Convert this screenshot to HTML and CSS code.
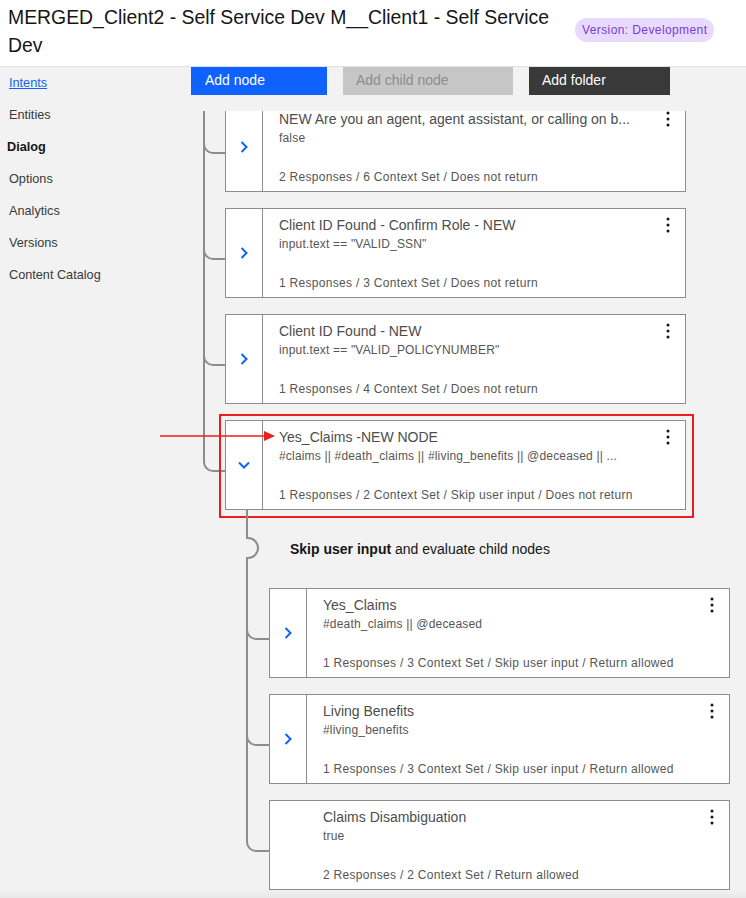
FILE: index.html
```html
<!DOCTYPE html>
<html lang="en">
<head>
<meta charset="utf-8">
<title>Dialog</title>
<link rel="stylesheet" href="styles.css">
</head>
<body>
<header class="header">
  <h1 class="title">MERGED_Client2 - Self Service Dev M__Client1 - Self Service Dev</h1>
  <span class="badge">Version: Development</span>
</header>
<div class="layout">
  <nav class="sidebar">
    <a class="nav-link nav-active" href="#">Intents</a>
    <span class="nav-item">Entities</span>
    <span class="nav-item nav-current">Dialog</span>
    <span class="nav-item">Options</span>
    <span class="nav-item">Analytics</span>
    <span class="nav-item">Versions</span>
    <span class="nav-item">Content Catalog</span>
  </nav>
  <main class="main">
    <div class="toolbar">
      <button class="btn btn-primary">Add node</button>
      <button class="btn btn-disabled">Add child node</button>
      <button class="btn btn-dark">Add folder</button>
    </div>
    <div class="viewport">
      <div class="tree">
        <div class="list">
          <div class="item">
            <div class="card">
              <div class="toggle"><svg class="chev" width="8" height="12" viewBox="0 0 8 12"><path d="M1.5 1 L6.5 6 L1.5 11"/></svg></div>
              <div class="card-body">
                <div class="card-title">NEW Are you an agent, agent assistant, or calling on b...</div>
                <div class="card-sub">false</div>
                <div class="card-foot">2 Responses / 6 Context Set / Does not return</div>
              </div>
              <svg class="kebab" width="4" height="16" viewBox="0 0 4 16"><circle cx="2" cy="2" r="1.5"/><circle cx="2" cy="8" r="1.5"/><circle cx="2" cy="14" r="1.5"/></svg>
            </div>
          </div>
          <div class="item">
            <div class="card">
              <div class="toggle"><svg class="chev" width="8" height="12" viewBox="0 0 8 12"><path d="M1.5 1 L6.5 6 L1.5 11"/></svg></div>
              <div class="card-body">
                <div class="card-title">Client ID Found - Confirm Role - NEW</div>
                <div class="card-sub">input.text == "VALID_SSN"</div>
                <div class="card-foot">1 Responses / 3 Context Set / Does not return</div>
              </div>
              <svg class="kebab" width="4" height="16" viewBox="0 0 4 16"><circle cx="2" cy="2" r="1.5"/><circle cx="2" cy="8" r="1.5"/><circle cx="2" cy="14" r="1.5"/></svg>
            </div>
          </div>
          <div class="item">
            <div class="card">
              <div class="toggle"><svg class="chev" width="8" height="12" viewBox="0 0 8 12"><path d="M1.5 1 L6.5 6 L1.5 11"/></svg></div>
              <div class="card-body">
                <div class="card-title">Client ID Found - NEW</div>
                <div class="card-sub">input.text == "VALID_POLICYNUMBER"</div>
                <div class="card-foot">1 Responses / 4 Context Set / Does not return</div>
              </div>
              <svg class="kebab" width="4" height="16" viewBox="0 0 4 16"><circle cx="2" cy="2" r="1.5"/><circle cx="2" cy="8" r="1.5"/><circle cx="2" cy="14" r="1.5"/></svg>
            </div>
          </div>
          <div class="item">
            <div class="card">
              <div class="toggle"><svg class="chev" width="12" height="8" viewBox="0 0 12 8"><path d="M1 1.5 L6 6.5 L11 1.5"/></svg></div>
              <div class="card-body">
                <div class="card-title">Yes_Claims -NEW NODE</div>
                <div class="card-sub">#claims || #death_claims || #living_benefits || @deceased || ...</div>
                <div class="card-foot">1 Responses / 2 Context Set / Skip user input / Does not return</div>
              </div>
              <svg class="kebab" width="4" height="16" viewBox="0 0 4 16"><circle cx="2" cy="2" r="1.5"/><circle cx="2" cy="8" r="1.5"/><circle cx="2" cy="14" r="1.5"/></svg>
              <div class="highlight"></div>
              <svg class="arrow" width="115" height="10" viewBox="0 0 115 10"><line x1="0" y1="5" x2="106" y2="5"/><polygon points="104,0 115,5 104,10"/></svg>
            </div>
            <div class="children">
              <div class="branch-label"><span class="bump"></span><b>Skip user input</b>&nbsp;and evaluate child nodes</div>
              <div class="list list-child">
                <div class="item item-child">
                  <div class="card">
                    <div class="toggle"><svg class="chev" width="8" height="12" viewBox="0 0 8 12"><path d="M1.5 1 L6.5 6 L1.5 11"/></svg></div>
                    <div class="card-body">
                      <div class="card-title">Yes_Claims</div>
                      <div class="card-sub">#death_claims || @deceased</div>
                      <div class="card-foot">1 Responses / 3 Context Set / Skip user input / Return allowed</div>
                    </div>
                    <svg class="kebab" width="4" height="16" viewBox="0 0 4 16"><circle cx="2" cy="2" r="1.5"/><circle cx="2" cy="8" r="1.5"/><circle cx="2" cy="14" r="1.5"/></svg>
                  </div>
                </div>
                <div class="item item-child">
                  <div class="card">
                    <div class="toggle"><svg class="chev" width="8" height="12" viewBox="0 0 8 12"><path d="M1.5 1 L6.5 6 L1.5 11"/></svg></div>
                    <div class="card-body">
                      <div class="card-title">Living Benefits</div>
                      <div class="card-sub">#living_benefits</div>
                      <div class="card-foot">1 Responses / 3 Context Set / Skip user input / Return allowed</div>
                    </div>
                    <svg class="kebab" width="4" height="16" viewBox="0 0 4 16"><circle cx="2" cy="2" r="1.5"/><circle cx="2" cy="8" r="1.5"/><circle cx="2" cy="14" r="1.5"/></svg>
                  </div>
                </div>
                <div class="item item-child">
                  <div class="card">
                    <div class="toggle toggle-empty"></div>
                    <div class="card-body">
                      <div class="card-title">Claims Disambiguation</div>
                      <div class="card-sub">true</div>
                      <div class="card-foot">2 Responses / 2 Context Set / Return allowed</div>
                    </div>
                    <svg class="kebab" width="4" height="16" viewBox="0 0 4 16"><circle cx="2" cy="2" r="1.5"/><circle cx="2" cy="8" r="1.5"/><circle cx="2" cy="14" r="1.5"/></svg>
                  </div>
                </div>
              </div>
            </div>
          </div>
        </div>
      </div>
    </div>
  </main>
</div>
<div class="bottom-shade"></div>
</body>
</html>
```
FILE: styles.css
```css
* { box-sizing: border-box; }
html, body { margin: 0; padding: 0; }
body {
  font-family: "Liberation Sans", Arial, sans-serif;
  background: #f2f2f2;
  color: #393939;
  height: 898px;
  overflow: hidden;
}
.header {
  display: flex;
  align-items: flex-start;
  height: 67px;
  padding: 3px 8px 0 8px;
  background: #fff;
  border-bottom: 1px solid #e0e0e0;
}
.title {
  margin: 0;
  width: 556px;
  font-size: 19.4px;
  line-height: 28px;
  font-weight: 400;
  color: #161616;
}
.badge {
  margin-top: 15px;
  margin-left: 11px;
  height: 24px;
  line-height: 24px;
  padding: 0 7px;
  border-radius: 12px;
  background: #e8daff;
  color: #7a3ad6;
  font-size: 12px;
  letter-spacing: 0.4px;
  white-space: nowrap;
}
.layout {
  display: flex;
  height: 831px;
}
.sidebar {
  width: 191px;
  flex: none;
  display: flex;
  flex-direction: column;
}
.nav-link, .nav-item {
  height: 32px;
  line-height: 32px;
  padding-left: 9px;
  font-size: 12.7px;
  color: #393939;
}
.nav-link { color: #0f62fe; text-decoration: underline; }
.nav-current { font-weight: 700; color: #161616; padding-left: 7px; }
.main {
  flex: 1;
  display: flex;
  flex-direction: column;
  min-width: 0;
}
.toolbar {
  position: relative;
  z-index: 2;
  display: flex;
  align-items: flex-start;
  gap: 16px;
  height: 44px;
  padding-bottom: 16px;
  background: #f2f2f2;
}
.btn {
  height: 28px;
  border: none;
  margin: 0;
  font-family: inherit;
  font-size: 14px;
  line-height: 26px;
  text-align: left;
  padding: 0 0 2px 13px;
  color: #fff;
}
.btn-primary { width: 136px; background: #0f62fe; padding-left: 14px; }
.btn-disabled { width: 170px; background: #c6c6c6; color: #8d8d8d; }
.btn-dark { width: 141px; background: #393939; }
.viewport {
  flex: 1;
  position: relative;
  z-index: 1;
}
.tree { margin-top: -9px; }
.list {
  display: flex;
  flex-direction: column;
  gap: 16px;
  padding-left: 34px;
}
.list-child { padding-left: 0; margin-top: 16px; }
.item { position: relative; }
.item::before {
  content: "";
  position: absolute;
  left: -22px;
  top: -16px;
  width: 22px;
  height: 66px;
  border-left: 2px solid #8d8d8d;
  border-bottom: 2px solid #8d8d8d;
  border-bottom-left-radius: 10px;
}
.item:not(:last-child)::after {
  content: "";
  position: absolute;
  left: -22px;
  top: 30px;
  bottom: -16px;
  border-left: 2px solid #8d8d8d;
}
.item-child::before { left: -23px; width: 23px; }
.item-child:not(:last-child)::after { left: -23px; }
.card {
  position: relative;
  display: flex;
  width: 461px;
  height: 90px;
  border: 1px solid #8d8d8d;
  background: #fff;
}
.toggle {
  width: 37px;
  flex: none;
  border-right: 1px solid #8d8d8d;
  display: flex;
  align-items: center;
  justify-content: center;
}
.toggle-empty { border-right: none; }
.chev path {
  fill: none;
  stroke: #0f62fe;
  stroke-width: 2;
}
.card-body {
  flex: 1;
  min-width: 0;
  display: flex;
  flex-direction: column;
  padding: 7px 40px 5px 16px;
}
.card-title {
  font-size: 14px;
  line-height: 19px;
  color: #4d4d4d;
  white-space: nowrap;
}
.card-sub {
  font-size: 12px;
  line-height: 18px;
  color: #565656;
  letter-spacing: 0.18px;
  white-space: nowrap;
}
.card-foot {
  margin-top: auto;
  font-size: 12px;
  line-height: 18px;
  color: #565656;
  letter-spacing: 0.3px;
  white-space: nowrap;
}
.kebab {
  position: absolute;
  top: 8px;
  right: 15px;
  fill: #161616;
}
.highlight {
  position: absolute;
  left: -7px;
  top: -7px;
  width: 475px;
  height: 104px;
  border: 2px solid #ee1d1d;
  pointer-events: none;
}
.arrow {
  position: absolute;
  left: -66px;
  top: 10px;
}
.arrow line { stroke: #ee1d1d; stroke-width: 1.6; }
.arrow polygon { fill: #ee1d1d; }
.children {
  position: relative;
  margin-left: 44px;
}
.branch-label {
  position: relative;
  height: 62px;
  padding: 30px 0 0 21px;
  font-size: 14px;
  line-height: 18px;
  color: #161616;
}
.branch-label b { font-weight: 700; }
.branch-label::before {
  content: "";
  position: absolute;
  left: -23px;
  top: 0;
  height: 29px;
  border-left: 2px solid #8d8d8d;
}
.branch-label::after {
  content: "";
  position: absolute;
  left: -23px;
  top: 47px;
  bottom: 0;
  border-left: 2px solid #8d8d8d;
}
.bump {
  position: absolute;
  left: -23px;
  top: 27px;
  width: 13px;
  height: 22px;
  border: 2px solid #8d8d8d;
  border-left: none;
  border-radius: 0 11px 11px 0;
}
.bottom-shade {
  position: fixed;
  left: 0;
  right: 0;
  bottom: 0;
  height: 10px;
  background: linear-gradient(to bottom, rgba(0,0,0,0), rgba(0,0,0,0.035));
  pointer-events: none;
  z-index: 5;
}
```
